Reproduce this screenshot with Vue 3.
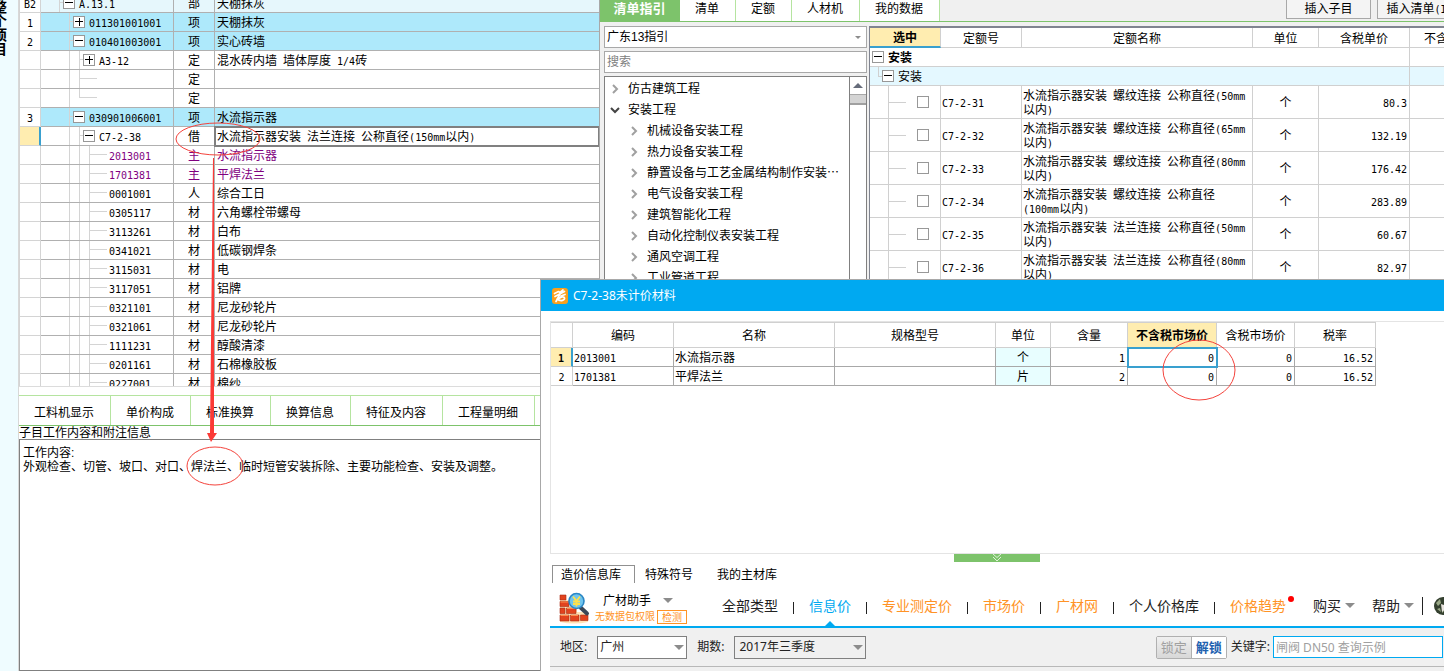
<script setup>
import { h, ref } from 'vue'

// Sets half-width characters in a narrow monospace face beside full-width Chinese.
const Mix = (props) =>
  h('span', null, props.text.split(/([\x20-\x7e]+)/).filter(Boolean).map((part) =>
    /^[\x20-\x7e]/.test(part) ? h('span', { class: 'half' }, part) : part))
Mix.props = ['text']

const rows = [
  { no: 'B2', level: 1, box: '-', code: 'A.13.1', type: '部', name: '天棚抹灰', tone: 'pale' },
  { no: '1', level: 2, box: '+', code: '011301001001', type: '项', name: '天棚抹灰', tone: 'item' },
  { no: '2', level: 2, box: '-', code: '010401003001', type: '项', name: '实心砖墙', tone: 'item' },
  { level: 3, box: '+', code: 'A3-12', type: '定', name: '混水砖内墙 墙体厚度 1/4砖' },
  { level: 3, type: '定' },
  { level: 3, type: '定', last: true },
  { no: '3', level: 2, box: '-', code: '030901006001', type: '项', name: '水流指示器', tone: 'item' },
  { level: 3, box: '-', code: 'C7-2-38', type: '借', name: '水流指示器安装 法兰连接 公称直径(150mm以内)', tone: 'current' },
  { level: 4, code: '2013001', type: '主', name: '水流指示器', tone: 'main' },
  { level: 4, code: '1701381', type: '主', name: '平焊法兰', tone: 'main' },
  { level: 4, code: '0001001', type: '人', name: '综合工日' },
  { level: 4, code: '0305117', type: '材', name: '六角螺栓带螺母' },
  { level: 4, code: '3113261', type: '材', name: '白布' },
  { level: 4, code: '0341021', type: '材', name: '低碳钢焊条' },
  { level: 4, code: '3115031', type: '材', name: '电' },
  { level: 4, code: '3117051', type: '材', name: '铝牌' },
  { level: 4, code: '0321101', type: '材', name: '尼龙砂轮片' },
  { level: 4, code: '0321061', type: '材', name: '尼龙砂轮片' },
  { level: 4, code: '1111231', type: '材', name: '醇酸清漆' },
  { level: 4, code: '0201161', type: '材', name: '石棉橡胶板' },
  { level: 4, code: '0227001', type: '材', name: '棉纱' },
]

const detailTabs = ['工料机显示', '单价构成', '标准换算', '换算信息', '特征及内容', '工程量明细', '']
const work = ref('工作内容:\n外观检查、切管、坡口、对口、焊法兰、临时短管安装拆除、主要功能检查、安装及调整。')

const guideTabs = ['清单指引', '清单', '定额', '人材机', '我的数据']
const guide = ref('广东13指引')
const tree = [
  { text: '仿古建筑工程' },
  { text: '安装工程', open: true },
  { text: '机械设备安装工程', sub: true },
  { text: '热力设备安装工程', sub: true },
  { text: '静置设备与工艺金属结构制作安装⋯', sub: true },
  { text: '电气设备安装工程', sub: true },
  { text: '建筑智能化工程', sub: true },
  { text: '自动化控制仪表安装工程', sub: true },
  { text: '通风空调工程', sub: true },
  { text: '工业管道工程', sub: true },
]

const quotas = [
  { code: 'C7-2-31', name: '水流指示器安装 螺纹连接 公称直径(50mm以内)', price: '80.3' },
  { code: 'C7-2-32', name: '水流指示器安装 螺纹连接 公称直径(65mm以内)', price: '132.19' },
  { code: 'C7-2-33', name: '水流指示器安装 螺纹连接 公称直径(80mm以内)', price: '176.42' },
  { code: 'C7-2-34', name: '水流指示器安装 螺纹连接 公称直径(100mm以内)', price: '283.89' },
  { code: 'C7-2-35', name: '水流指示器安装 法兰连接 公称直径(50mm以内)', price: '60.67' },
  { code: 'C7-2-36', name: '水流指示器安装 法兰连接 公称直径(80mm以内)', price: '82.97' },
]

const materials = [
  { no: 1, code: '2013001', name: '水流指示器', unit: '个', qty: 1 },
  { no: 2, code: '1701381', name: '平焊法兰', unit: '片', qty: 2 },
]

const links = [
  { text: '全部类型' },
  { text: '信息价', cls: 'on' },
  { text: '专业测定价', cls: 'hot' },
  { text: '市场价', cls: 'hot' },
  { text: '广材网', cls: 'hot' },
  { text: '个人价格库' },
  { text: '价格趋势', cls: 'hot new' },
]
const area = ref('广州')
const period = ref('2017年三季度')
const keyword = ref('')
</script>

<template>
  <div class="app">
    <main class="desk">
      <section class="left">
        <aside class="strip"><b>整个项目</b></aside>
        <div class="work">
          <div class="grid-view">
            <table class="bill">
              <colgroup><col class="c-no"><col class="c-code"><col class="c-type"><col></colgroup>
              <tbody>
                <tr v-for="(r, i) in rows" :key="i" :class="r.tone">
                  <td class="no"><Mix :text="r.no || ''" /></td>
                  <td class="code">
                    <div class="node">
                      <template v-if="r.level > 2"><i class="rail"></i></template>
                      <template v-if="r.level > 3"><i class="rail"></i></template>
                      <i v-if="r.box" class="stub"></i>
                      <i v-else class="arm" :class="{ end: r.last }"></i>
                      <button v-if="r.box" type="button" class="box" :class="{ plus: r.box === '+' }" :aria-label="r.code"></button>
                      <Mix class="label" :text="r.code || ''" />
                    </div>
                  </td>
                  <td class="type">{{ r.type }}</td>
                  <td class="name"><Mix :text="r.name || ''" /></td>
                </tr>
              </tbody>
            </table>
          </div>
          <nav class="detail-tabs">
            <button v-for="t in detailTabs" :key="t" type="button">{{ t }}</button>
          </nav>
          <label class="caption" for="work">子目工作内容和附注信息</label>
          <textarea id="work" v-model="work" spellcheck="false"></textarea>
        </div>
      </section>

      <section class="right">
        <header class="bar">
          <button v-for="(t, i) in guideTabs" :key="t" type="button" class="tab" :class="{ active: i === 0 }">{{ t }}</button>
          <div class="actions">
            <button type="button">插入子目</button>
            <button type="button"><Mix text="插入清单(I)" /></button>
          </div>
        </header>
        <div class="panes">
          <div class="guide">
            <span class="pick">
              <select v-model="guide" aria-label="指引"><option>广东13指引</option></select><i class="tri small"></i>
            </span>
            <input class="find" type="text" placeholder="搜索" aria-label="搜索">
            <div class="tree">
              <ul>
                <li v-for="n in tree" :key="n.text" :class="{ sub: n.sub }">
                  <svg width="10" height="10" viewBox="0 0 10 10" fill="none" stroke-width="2">
                    <path v-if="n.open" d="M1 3l4 4 4-4" stroke="#444" />
                    <path v-else d="M3 1l4 4-4 4" stroke="#a0a0a0" />
                  </svg>
                  {{ n.text }}
                </li>
              </ul>
              <div class="scroll"><button type="button" aria-label="向上"><i class="tri up"></i></button><i class="thumb"></i></div>
            </div>
          </div>
          <div class="quota-view">
            <table class="quota">
              <colgroup><col class="q1"><col class="q2"><col><col class="q4"><col class="q5"><col class="q6"></colgroup>
              <thead>
                <tr><th class="sel">选中</th><th>定额号</th><th>定额名称</th><th>单位</th><th>含税单价</th><th>不含税单价</th></tr>
              </thead>
              <tbody>
                <tr class="group">
                  <td colspan="5"><div class="g"><button type="button" class="box" aria-label="安装"></button><b>安装</b></div></td><td></td>
                </tr>
                <tr class="group second">
                  <td colspan="5"><div class="g"><i class="elbow"></i><button type="button" class="box" aria-label="安装"></button><span>安装</span></div></td><td></td>
                </tr>
                <tr v-for="q in quotas" :key="q.code">
                  <td class="check"><div><i></i><input type="checkbox" :aria-label="q.code"></div></td>
                  <td class="pad"><Mix :text="q.code" /></td>
                  <td class="title"><Mix :text="q.name" /></td>
                  <td class="mid">个</td>
                  <td class="num"><Mix :text="q.price" /></td>
                  <td></td>
                </tr>
              </tbody>
            </table>
          </div>
        </div>
      </section>
    </main>

    <section class="dialog">
      <header class="title-bar">
        <svg width="16" height="16" viewBox="0 0 16 16">
          <rect width="16" height="16" rx="3" fill="#f8a01c" />
          <path d="M2.500 5.500l4-2 1.500 1 3-2.500M3 8.500l9.500-5M8 6l-4 7.500M5 11c4 3 8 1 7.500-1S9 9 7 10.500M9 8l4-1.500" fill="none" stroke="#fff" stroke-width="1.700" stroke-linecap="round" stroke-linejoin="round" />
        </svg>
        <span>C7-2-38未计价材料</span>
      </header>
      <div class="sheet">
        <table class="mat">
          <colgroup><col class="m1"><col class="m2"><col class="m3"><col class="m3"><col class="m5"><col class="m6"><col class="m7"><col class="m8"><col class="m9"></colgroup>
          <thead>
            <tr><th></th><th>编码</th><th>名称</th><th>规格型号</th><th>单位</th><th>含量</th><th class="sel">不含税市场价</th><th>含税市场价</th><th>税率</th></tr>
          </thead>
          <tbody>
            <tr v-for="m in materials" :key="m.no" :class="{ cur: m.no === 1 }">
              <td class="idx"><Mix :text="String(m.no)" /></td>
              <td><Mix :text="m.code" /></td>
              <td>{{ m.name }}</td>
              <td></td>
              <td class="unit">{{ m.unit }}</td>
              <td class="n"><Mix :text="String(m.qty)" /></td>
              <td class="n edit"><Mix text="0" /></td>
              <td class="n"><Mix text="0" /></td>
              <td class="n"><Mix text="16.52" /></td>
            </tr>
          </tbody>
        </table>
        <button type="button" class="handle" aria-label="收起">
          <svg width="10" height="8" viewBox="0 0 10 8" fill="none" stroke="#dff2d8"><path d="M1 0l4 3.500L9 0M1 3l4 4 4-4" /></svg>
        </button>
      </div>
      <nav class="lib-tabs">
        <button type="button" class="on">造价信息库</button>
        <button type="button">特殊符号</button>
        <button type="button">我的主材库</button>
      </nav>
      <div class="tools">
        <svg class="logo" width="32" height="32" viewBox="0 0 32 32">
          <path d="M2 3h6v5h3v6h8v6h11v10q-14 3-28 0z" fill="#ffe3b8" />
          <g fill="#e2431e" stroke="#a82a10" stroke-width=".6">
            <path d="M2 3h6v5H2zM2 9.500h9v5H2zM2 16h5v5.500H2zM8.500 16H18v5.500H8.500zM2 23h9v6H2zM12.500 23H21v6h-8.500zM22.500 23H30v5.500h-7.500z" />
          </g>
          <path d="M2.500 10h8M9 16.500h8M2.500 23.500h8M13 23.500h7" stroke="#ff8a4a" />
          <path d="M22.500 15.500l6.500 6" stroke="#3b4757" stroke-width="4" stroke-linecap="round" />
          <circle cx="18.500" cy="9" r="7.500" fill="#6fc4ee" stroke="#2a86c4" stroke-width="1.600" />
          <path d="M15 4.500l3.500 4.500L22 4.500M18.500 9v5.500M15 9.500h7M15 12h7" fill="none" stroke="#ffe14a" stroke-width="1.800" />
        </svg>
        <div class="brand">
          <button type="button" class="who">广材助手<i class="tri"></i></button>
          <div class="warn">无数据包权限<button type="button">检测</button></div>
        </div>
        <ul class="links">
          <li v-for="l in links" :key="l.text"><a href="#" :class="l.cls">{{ l.text }}</a></li>
        </ul>
        <button type="button" class="menu">购买<i class="tri"></i></button>
        <button type="button" class="menu">帮助<i class="tri"></i></button>
        <i class="rule"></i>
        <svg class="avatar" width="18" height="18" viewBox="0 0 18 18">
          <circle cx="9" cy="9" r="9" fill="#34402f" />
          <path d="M2 6l4-4 1 4-3 3zM8 9l3-2 1 5-4 4zM3 12l3-1 1 4z" fill="#9aa886" />
          <path d="M7 7l3 1v5l-2 2z" fill="#e9e4df" />
        </svg>
      </div>
      <div class="filters">
        <label for="area">地区:</label>
        <span class="pick w1"><select id="area" v-model="area"><option>广州</option></select><i class="tri"></i></span>
        <label for="period">期数:</label>
        <span class="pick w2"><select id="period" v-model="period"><option>2017年三季度</option></select><i class="tri"></i></span>
        <div class="lock"><button type="button" disabled>锁定</button><button type="button">解锁</button></div>
        <label for="kw">关键字:</label>
        <input id="kw" v-model="keyword" type="text" placeholder="闸阀 DN50 查询示例">
      </div>
    </section>

    <svg class="marks" width="1300" height="500" viewBox="0 0 1300 500" fill="none" stroke="#f4433c">
      <ellipse cx="218" cy="139" rx="42" ry="16" />
      <ellipse cx="215" cy="466" rx="28" ry="19" />
      <ellipse cx="1199" cy="370" rx="36" ry="30" />
      <path d="M213 158L214 158L214 433H217L211 442L207 433H210Z" fill="#fb3a36" stroke="none" />
    </svg>
  </div>
</template>

<style>
body { background: #fff; overflow: hidden; }
.half { font-family: "DejaVu Sans Mono", monospace; font-size: 10px; line-height: 10px; }
</style>

<style scoped>
.app { position: relative; height: 100vh; overflow: hidden; font: 12px/18px "Liberation Sans", "Noto Sans CJK SC", sans-serif; color: #000; }
button, input, select, textarea { font: inherit; color: inherit; margin: 0; padding: 0; border: 0; border-radius: 0; background: none; box-sizing: border-box; outline: 0; }
button { white-space: nowrap; }
select { appearance: none; width: 100%; }
ul { list-style: none; margin: 0; padding: 0; }
table { border-collapse: separate; border-spacing: 0; table-layout: fixed; }
td, th { padding: 0; box-sizing: border-box; overflow: hidden; white-space: nowrap; font-weight: 400; }
.tri { display: block; border: 5px solid transparent; border-top-color: #8c8c8c; border-bottom: 0; }
.box { position: relative; flex: none; width: 12px; height: 12px; border: 1px solid #989898; background: #fff; }
.box::before, .box.plus::after { content: ""; position: absolute; left: 1px; top: 4px; width: 8px; height: 1px; background: #000; }
.box.plus::after { left: 5px; top: 1px; width: 1px; height: 8px; }

.desk { display: grid; grid-template-columns: 150fr 211fr; height: 100%; }
.left { display: flex; min-width: 0; border-right: 1px solid #a8a8a8; }
.strip { flex: none; width: 18px; border-right: 1px solid #d8d8d8; background: #effcff; overflow: hidden; }
.strip b { display: block; writing-mode: vertical-rl; font-size: 14px; line-height: 14px; margin-left: -8px; }
.work { flex: 1; min-width: 0; display: flex; flex-direction: column; }

.grid-view { flex: none; height: 386px; overflow: hidden; border-bottom: 1px solid #dcdcdc; }
.bill { width: 100%; margin-top: -6px; border-left: 1px solid #d4d4d4; }
.bill .c-no { width: 21px; }
.bill .c-code { width: 133px; }
.bill .c-type { width: 41px; }
.bill td { height: 19px; padding-top: 2px; line-height: 16px; border-right: 1px solid #b0b0b0; border-bottom: 1px solid #b0b0b0; }
.bill td.code { padding-top: 0; }
.bill td.no { text-align: center; border-color: #d4d4d4; background: #fff; }
.bill td.type { text-align: center; }
.bill td.name { padding-left: 2px; border-right: 0; }
.node { display: flex; align-items: center; height: 18px; padding-left: 28px; }
.pale .node { padding-left: 18px; }
.rail { flex: none; width: 9px; height: 18px; border-left: 1px solid #d4d4d4; }
.stub, .arm { flex: none; width: 3px; height: 18px; border-left: 1px solid #d4d4d4; background: linear-gradient(#d4d4d4, #d4d4d4) 0 8px / 100% 1px no-repeat; }
.arm { width: 17px; margin-right: -2px; }
.arm.end { height: 9px; align-self: flex-start; }
.label { margin-left: 4px; padding-top: 2px; }
.pale td { background: #e6f7fc; }
.item td { background: #aee9fb; }
.main td { color: #800080; }
.bill .current td.no { background: #ffedb0; border-right: 2px solid #39a0cf; }
.bill .current td.name { outline: 2px solid #808080; outline-offset: -1px; }

.detail-tabs { flex: none; display: flex; height: 31px; margin-top: 8px; box-sizing: border-box; border-top: 1px solid #b5e4a0; border-bottom: 1px solid #7dc36b; overflow: hidden; }
.detail-tabs button { padding: 4px 16px 0 15px; border-right: 1px solid #b5e4a0; }
.caption { padding-top: 1px; line-height: 12px; }
textarea { flex: 1; resize: none; padding: 6px 3px; border: 1px solid #808080; border-right: 0; line-height: 14px; }

.right { min-width: 0; background: #f0f0f0; }
.bar { display: flex; height: 22px; box-sizing: border-box; border-bottom: 1px solid #7dc36b; overflow: hidden; }
.tab { flex: none; height: 21px; padding: 0 16px 4px 15px; background: #fff; border-right: 1px solid #b5e4a0; }
.tab.active { width: 80px; padding: 0 0 4px; font-size: 13px; font-weight: 700; color: #fff; background: #7dc36b; border-color: #7dc36b; }
.actions { display: flex; gap: 6px; margin: 0 -18px 0 auto; }
.actions button { width: 85px; height: 19px; padding-bottom: 3px; border: 1px solid #a8a8a8; border-top: 0; background: #f4f4f4; }
.panes { display: flex; gap: 2px; padding: 4px 0 0 4px; }
.guide { flex: none; width: 263px; }
.pick { display: grid; align-items: center; box-sizing: border-box; height: 22px; border: 1px solid #a8a8a8; background: #fff; }
.pick > * { grid-area: 1 / 1; }
.pick select { height: 20px; padding-left: 2px; }
.pick .tri { justify-self: end; margin-right: 2px; pointer-events: none; }
.pick .small { border-width: 3px 3px 0; margin-right: 5px; }
.find { display: block; width: 100%; height: 22px; margin-top: 3px; padding-left: 2px; border: 1px solid #a8a8a8; background: #fff; }
.find::placeholder { color: #808080; opacity: 1; }
.tree { display: flex; box-sizing: border-box; height: 204px; margin-top: 3px; border: 1px solid #808080; background: #fff; overflow: hidden; }
.tree ul { flex: 1; padding-top: 1px; }
.tree li { display: flex; align-items: center; gap: 8px; height: 21px; padding-left: 5px; white-space: nowrap; }
.tree li.sub { padding-left: 24px; }
.scroll { width: 16px; border-left: 1px solid #808080; }
.scroll button { display: flex; align-items: center; justify-content: center; width: 100%; height: 18px; border-bottom: 1px solid #a8a8a8; }
.tri.up { border-width: 0 5px 5px; border-bottom: 5px solid #666c7a; }
.thumb { display: block; height: 8px; background: #d4d4d4; border-bottom: 2px solid #a0a0a0; }

.quota-view { flex: 1; min-width: 0; overflow: hidden; height: 264px; background: #fff; border: 1px solid #808490; border-right: 0; border-top-width: 2px; }
.quota { width: calc(100% + 55px); }
.q1 { width: 71px; } .q2 { width: 81px; } .q4 { width: 66px; } .q5 { width: 91px; } .q6 { width: 89px; }
.quota th, .quota td { border-right: 1px solid #d0d0d0; border-bottom: 1px solid #d0d0d0; }
.quota th { height: 20px; padding-top: 2px; line-height: 16px; }
.quota th.sel { background: #ffedb0; font-weight: 700; border-bottom: 2px solid #39a0cf; }
.quota td { height: 33px; }
.quota .group td { height: 19px; line-height: 18px; }
.quota .second td { background: #e4f8ff; }
.g { display: flex; align-items: center; height: 18px; padding-left: 2px; }
.g b, .g span { margin-left: 4px; padding-top: 2px; }
.elbow { width: 3px; height: 9px; margin-left: 6px; align-self: flex-start; border: solid #d0d0d0; border-width: 0 0 1px 1px; }
.check div { display: flex; align-items: center; height: 32px; margin-left: 18px; border-left: 1px solid #d0d0d0; }
.check i { width: 17px; height: 1px; background: #d0d0d0; }
.check input { appearance: none; width: 12px; height: 12px; margin-left: 11px; border: 1px solid #989898; background: #fff; }
.quota .pad { padding: 2px 0 0 1px; }
.quota .title { padding: 2px 4px 0 1px; line-height: 14px; white-space: normal; }
.quota .mid { padding-top: 2px; text-align: center; }
.quota .num { padding: 2px 2px 0 0; text-align: right; }

.dialog { position: absolute; left: 540px; right: 0; top: 279px; bottom: 0; display: flex; flex-direction: column; border: 1px solid #a8a8a8; border-width: 1px 0 0 1px; background: #fff; overflow: hidden; }
.title-bar { flex: none; display: flex; align-items: center; gap: 5px; height: 31px; padding-left: 11px; background: #00a9f1; color: #fff; font-family: "Noto Sans", "Noto Sans CJK SC", sans-serif; }
.sheet { position: relative; flex: 1; min-height: 0; margin: 10px 0 0 9px; border: 1px solid #e4e4e4; border-right: 0; }
.mat { width: 825px; border-top: 1px solid #d0d0d0; }
.m1 { width: 22px; } .m2 { width: 101px; } .m3 { width: 161px; } .m5 { width: 55px; } .m6 { width: 77px; } .m7 { width: 89px; } .m8 { width: 78px; } .m9 { width: 81px; }
.mat th { height: 25px; padding-top: 2px; border-right: 1px solid #d0d0d0; border-bottom: 1px solid #d0d0d0; }
.mat th.sel { background: #ffedb0; font-weight: 700; overflow: visible; }
.mat td { height: 19px; padding: 2px 0 0 1px; line-height: 16px; border-right: 1px solid #a8a8a8; border-bottom: 1px solid #a8a8a8; }
.mat .idx { padding: 2px 0 0; text-align: center; border-color: #d0d0d0; }
.mat .cur .idx { font-weight: 700; background: #ffedb0; border-right: 2px solid #39a0cf; }
.mat .unit { padding: 2px 0 0; text-align: center; background: #e8feff; }
.mat .n { text-align: right; padding-right: 2px; }
.mat .cur .edit { outline: 2px solid #39a0cf; outline-offset: -1px; }
.handle { position: absolute; left: 403px; top: 100%; display: flex; justify-content: center; width: 86px; height: 8px; margin-top: 1px; background: #7dc36b; }
.lib-tabs { flex: none; display: flex; margin: 11px 0 0 11px; height: 18px; }
.lib-tabs button { padding: 1px 8px 0 10px; margin-right: 6px; }
.lib-tabs .on { width: 83px; padding: 0 8px; margin-right: 0; border: 1px solid #909090; border-bottom: 0; line-height: 16px; text-align: left; }
.tools { flex: none; display: flex; align-items: center; height: 41px; margin-left: 9px; padding-top: 2px; border-bottom: 2px solid #00a9f1; overflow: hidden; color: #222; font-family: "Noto Sans", "Noto Sans CJK SC", sans-serif; }
.logo { flex: none; margin: 4px 0 0 8px; }
.brand { flex: none; width: 100px; margin: 5px 0 0 5px; }
.who { display: flex; align-items: center; gap: 12px; height: 17px; padding-left: 8px; color: #000; }
.warn { display: flex; align-items: center; gap: 2px; height: 15px; font-size: 10px; line-height: 13px; color: #ff9326; white-space: nowrap; }
.warn button { width: 30px; height: 14px; border: 1px solid #ff9326; line-height: 12px; }
.links { display: flex; margin-left: 27px; font-size: 14px; }
.links li { display: flex; align-items: center; white-space: nowrap; }
.links li + li::before { content: ""; width: 1px; height: 12px; margin: 4px 15px 0; background: #222; }
.links a { position: relative; line-height: 41px; color: inherit; text-decoration: none; }
.links .on { color: #00a9f1; }
.links .hot { color: #ff9326; }
.links .on::after { content: ""; position: absolute; left: 50%; bottom: 0; margin-left: -5px; border: 5px solid transparent; border-top: 0; border-bottom-color: #00a9f1; }
.links .new::after { content: ""; position: absolute; left: 100%; top: 11px; margin-left: 2px; width: 6px; height: 6px; border-radius: 50%; background: #f00; }
.menu { display: flex; align-items: center; gap: 4px; margin-left: 17px; font-size: 14px; }
.links + .menu { margin-left: 27px; }
.rule { flex: none; width: 1px; height: 18px; margin-left: 8px; background: #222; }
.avatar { flex: none; margin-left: 11px; }
.filters { flex: none; display: flex; align-items: center; height: 38px; margin: 0 0 4px 9px; padding: 0 1px 0 10px; border-bottom: 1px solid #b8b8b8; box-shadow: 0 4px #f0f0f0; background: #f0f0f0; color: #222; white-space: nowrap; font-family: "Noto Sans", "Noto Sans CJK SC", sans-serif; }
.filters .pick { height: 23px; margin: 0 10px; border-color: #808080; }
.filters .w1 { width: 90px; }
.filters .w2 { width: 132px; background: #f0f0f0; }
.filters .w2 select { padding-left: 4px; }
.lock { display: flex; margin: 0 4px 0 auto; border: 1px solid #b0b0b0; border-radius: 2px; }
.lock button { width: 35px; height: 21px; font-size: 13px; background: #fff; color: #1f62b0; font-weight: 700; }
.lock button + button { width: 34px; }
.lock button:disabled { border-right: 1px solid #b0b0b0; background: linear-gradient(#f0f0f0, #d8d8d8); color: #a0a0a0; font-weight: 400; }
.filters input { flex: none; width: 170px; height: 22px; margin-left: 3px; padding: 0 2px; border: 1px solid #00a9f1; background: #fff; }
.filters input::placeholder { color: #a0a0a0; opacity: 1; }

.marks { position: absolute; left: 0; top: 0; pointer-events: none; }
</style>
